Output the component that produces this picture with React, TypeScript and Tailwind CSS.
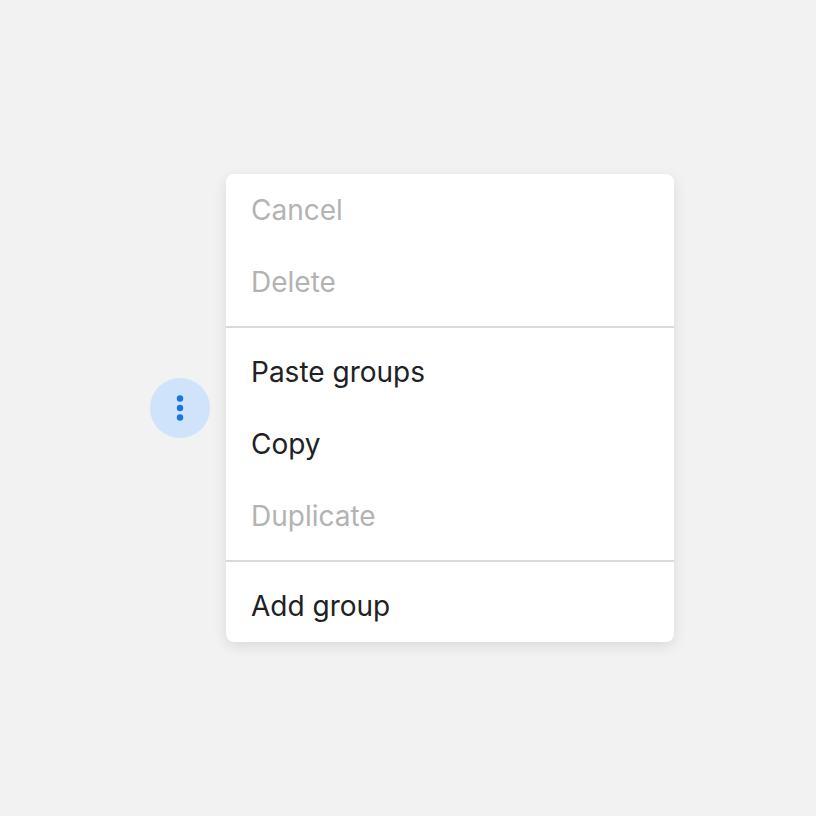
const items = [
    [
        { label: "Cancel", disabled: true },
        { label: "Delete", disabled: true },
    ],
    [
        { label: "Paste groups", disabled: false },
        { label: "Copy", disabled: false },
        { label: "Duplicate", disabled: true },
    ],
    [{ label: "Add group", disabled: false }],
];

export default function App() {
    return (
        <div
            className="w-full h-[816px] bg-[#f2f2f2] flex items-center pl-[150px]"
            style={{ fontFamily: "Inter, 'Noto Sans', sans-serif" }}
        >
            <button className="w-[60px] h-[60px] rounded-full bg-[#cfe3fb] flex items-center justify-center shrink-0">
                <svg width="8" height="28" viewBox="0 0 8 28">
                    <circle cx="4" cy="4.5" r="3.2" fill="#1a73e8" />
                    <circle cx="4" cy="14" r="3.2" fill="#1a73e8" />
                    <circle cx="4" cy="23.5" r="3.2" fill="#1a73e8" />
                </svg>
            </button>
            <div className="ml-4 w-[448px] bg-white rounded-lg shadow-[0_4px_14px_rgba(0,0,0,0.1)]">
                {items.map((group, gi) => (
                    <div key={gi}>
                        {gi > 0 && <div className="h-[2px] bg-[#d9d9d9] my-2" />}
                        {group.map(item => (
                            <div
                                key={item.label}
                                className={`h-[72px] flex items-center pl-[25px] pr-6 text-[28px] ${item.disabled ? "text-[#b3b3b3]" : "text-[#202124]"}`}
                            >
                                {item.label}
                            </div>
                        ))}
                    </div>
                ))}
            </div>
        </div>
    );
}
